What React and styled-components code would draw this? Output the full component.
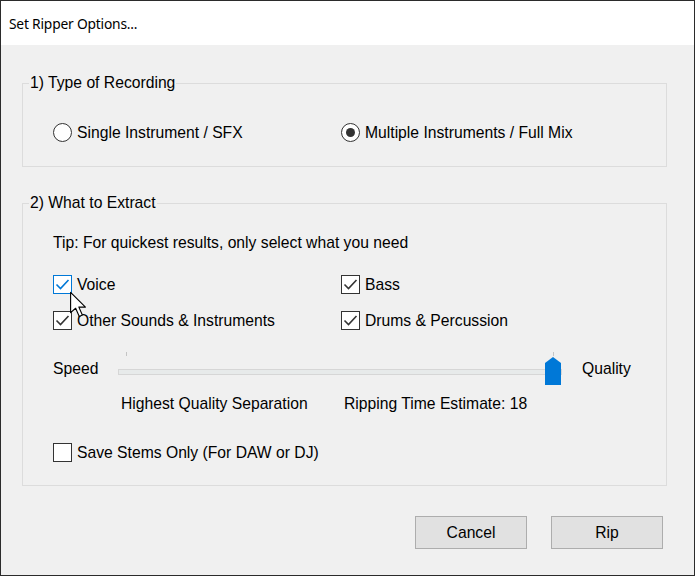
import React from 'react'
import styled, { createGlobalStyle } from 'styled-components'

const GlobalStyle = createGlobalStyle`
    html, body {
        margin: 0;
        padding: 0;
        background: #f0f0f0;
    }
    body {
        font-family: "Liberation Sans", Arial, sans-serif;
        font-size: 15.7px;
        color: #000;
    }
`

const Dialog = styled.div`
    position: relative;
    box-sizing: border-box;
    width: 695px;
    height: 576px;
    border: 1px solid #2b2b2b;
    background: #f0f0f0;
    display: flex;
    flex-direction: column;
    overflow: hidden;
`

const TitleBar = styled.div`
    height: 44px;
    flex: none;
    background: #fff;
    display: flex;
    align-items: center;
    padding-left: 8px;
    font-family: "Noto Sans", "Open Sans", sans-serif;
    font-size: 13.8px;
    letter-spacing: -0.2px;
`

const Body = styled.div`
    padding: 0 27px 0 21px;
    display: flex;
    flex-direction: column;
`

const Group = styled.fieldset`
    margin: ${p => p.$top}px 0 0;
    padding: ${p => p.$padTop}px 0 ${p => p.$padBottom}px 30px;
    border: 1px solid #dcdcdc;
    min-width: 0;
`

const Legend = styled.legend`
    margin-left: -24px;
    padding: 0 1px;
    line-height: 18px;
`

const TwoCols = styled.div`
    display: grid;
    grid-template-columns: ${p => p.$first || 288}px 1fr;
    row-gap: ${p => p.$gap || 0}px;
    margin-top: ${p => p.$top || 0}px;
`

const Choice = styled.label`
    display: flex;
    align-items: center;
    gap: 5px;
    height: 19px;
    line-height: 19px;
    white-space: nowrap;
`

const RadioRing = styled.span`
    box-sizing: border-box;
    width: 19px;
    height: 19px;
    border: 1px solid #333;
    border-radius: 50%;
    background: #fff;
    display: flex;
    align-items: center;
    justify-content: center;
    flex: none;
    &::after {
        content: '';
        width: 9px;
        height: 9px;
        border-radius: 50%;
        background: ${p => (p.$checked ? '#333' : 'transparent')};
    }
`

const Box = styled.span`
    box-sizing: border-box;
    width: 19px;
    height: 19px;
    border: 1px solid ${p => (p.$hover ? '#0078d7' : '#333')};
    background: #fff;
    flex: none;
    display: flex;
    align-items: center;
    justify-content: center;
`

const Tip = styled.div`
    line-height: 18px;
`

const SliderRow = styled.div`
    display: flex;
    align-items: center;
    margin-top: 22px;
`

const SliderLabel = styled.span`
    width: 65px;
    flex: none;
`

const SliderBox = styled.div`
    position: relative;
    width: 444px;
    height: 33px;
    flex: none;
    margin-right: 20px;
`

const Track = styled.div`
    position: absolute;
    left: 0;
    right: 0;
    top: 17px;
    height: 6px;
    box-sizing: border-box;
    background: #e7eaea;
    border: 1px solid #d6d6d6;
`

const Tick = styled.div`
    position: absolute;
    top: 0;
    width: 1px;
    height: 4px;
    background: #c4c4c4;
`

const Thumb = styled.svg`
    position: absolute;
    top: 5px;
    width: 16px;
    height: 28px;
`

const InfoRow = styled(TwoCols)`
    line-height: 18px;
    padding-left: 68px;
    grid-template-columns: 223px 1fr;
`

const Footer = styled.div`
    display: flex;
    justify-content: flex-end;
    gap: 24px;
    margin-top: 30px;
    padding-right: 4px;
`

const Button = styled.button`
    box-sizing: border-box;
    width: 112px;
    height: 33px;
    background: #e1e1e1;
    border: 1px solid #adadad;
    font: inherit;
    color: #000;
    padding: 0;
`

const Cursor = styled.svg`
    position: absolute;
    left: 68px;
    top: 290px;
    width: 20px;
    height: 28px;
`

function Radio({ checked, children }) {
    return (
        <Choice>
            <RadioRing $checked={checked} />
            {children}
        </Choice>
    )
}

function Check({ checked, hover, children }) {
    const stroke = hover ? '#0078d7' : '#333'
    return (
        <Choice>
            <Box $hover={hover}>
                {checked && (
                    <svg width="17" height="17" viewBox="0 0 17 17">
                        <polyline points="2.5,8.5 6.5,12.5 14.5,4" fill="none" stroke={stroke} strokeWidth="1.6" />
                    </svg>
                )}
            </Box>
            {children}
        </Choice>
    )
}

function Slider({ value }) {
    const width = 444
    const left = Math.round(value * (width - 17))
    return (
        <SliderBox>
            <Tick style={{ left: 8 }} />
            <Tick style={{ left: width - 9 }} />
            <Track />
            <Thumb style={{ left }} viewBox="0 0 16 28">
                <polygon points="0,6 8,0 16,6 16,28 0,28" fill="#0078d7" />
            </Thumb>
        </SliderBox>
    )
}

export default function App() {
    return (
        <>
            <GlobalStyle />
            <Dialog>
                <TitleBar>Set Ripper Options...</TitleBar>
                <Body>
                    <Group $top={29} $padTop={31} $padBottom={24}>
                        <Legend>1) Type of Recording</Legend>
                        <TwoCols>
                            <Radio>Single Instrument / SFX</Radio>
                            <Radio checked>Multiple Instruments / Full Mix</Radio>
                        </TwoCols>
                    </Group>
                    <Group $top={27} $padTop={22} $padBottom={23}>
                        <Legend>2) What to Extract</Legend>
                        <Tip>Tip: For quickest results, only select what you need</Tip>
                        <TwoCols $top={23} $gap={17}>
                            <Check checked hover>Voice</Check>
                            <Check checked>Bass</Check>
                            <Check checked>Other Sounds &amp; Instruments</Check>
                            <Check checked>Drums &amp; Percussion</Check>
                        </TwoCols>
                        <SliderRow>
                            <SliderLabel>Speed</SliderLabel>
                            <Slider value={1} />
                            <span>Quality</span>
                        </SliderRow>
                        <InfoRow $top={10}>
                            <span>Highest Quality Separation</span>
                            <span>Ripping Time Estimate: 18</span>
                        </InfoRow>
                        <TwoCols $top={30}>
                            <Check>Save Stems Only (For DAW or DJ)</Check>
                        </TwoCols>
                    </Group>
                    <Footer>
                        <Button>Cancel</Button>
                        <Button>Rip</Button>
                    </Footer>
                </Body>
                <Cursor viewBox="0 0 14 20">
                    <path d="M1 1 L1 15.5 L4.6 12.3 L7.2 18.2 L9.4 17.2 L6.9 11.5 L11.6 11.5 Z" fill="#fff" stroke="#000" strokeWidth="0.8" strokeLinejoin="round" />
                </Cursor>
            </Dialog>
        </>
    )
}
